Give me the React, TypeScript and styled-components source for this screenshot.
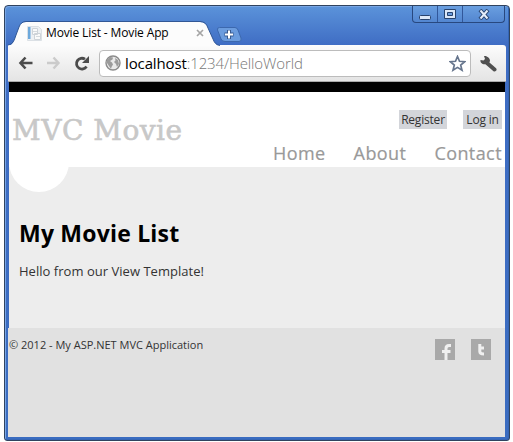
import React from 'react';
import styled, { createGlobalStyle } from 'styled-components';

const Global = createGlobalStyle`
  * { box-sizing: border-box; }
  body { margin: 0; background: #fff; overflow: hidden; font-family: "Open Sans", "Noto Sans", sans-serif; }
`;

const Window = styled.div`
  width: 506px;
  height: 436px;
  margin: 5px 0 0 4px;
  display: flex;
  flex-direction: column;
  padding: 0 3px 3px 4px;
  border: 1px solid #30435f;
  border-radius: 4px 4px 3px 3px;
  background: linear-gradient(#5b93da 0, #3f6dc4 39px, #3a6cc0 100%);
  box-shadow: inset 1px 1px 0 #79a6e4, inset -1px -1px 0 #3565b5;
`;

const TitleBar = styled.header`
  height: 39px;
  display: flex;
  align-items: flex-start;
  flex: none;
`;

const Tab = styled.div`
  position: relative;
  width: 211px;
  height: 24px;
  margin-top: 15px;
  padding: 0 12px 0 18px;
  display: flex;
  align-items: center;
`;

const TabShape = styled.svg`
  position: absolute;
  left: -1px;
  top: 0;
`;

const PageIcon = styled.svg`
  position: relative;
  flex: none;
`;

const TabTitle = styled.span`
  position: relative;
  margin-left: 4px;
  flex: 1;
  font-size: 12px;
  line-height: 24px;
  letter-spacing: -0.13px;
  color: #000;
  white-space: nowrap;
`;

const TabClose = styled.svg`
  position: relative;
  margin-right: 4px;
`;

const NewTab = styled.svg`
  margin: 20px 0 0 -4px;
`;

const WindowControls = styled.div`
  display: flex;
  height: 17px;
  margin: 0 1px 0 auto;
  border: 1px solid #28487f;
  border-top: 0;
  border-radius: 0 0 4px 4px;
  background: linear-gradient(#6a9fe0, #5386d0);
`;

const ControlButton = styled.div<{ $width: number }>`
  width: ${(p) => p.$width}px;
  display: flex;
  align-items: center;
  justify-content: center;
  & + & { border-left: 1px solid #31579a; }
`;

const Toolbar = styled.div`
  height: 37px;
  margin-left: -1px;
  flex: none;
  display: flex;
  align-items: center;
  padding: 0 8px 0 10px;
  gap: 12px;
  background: linear-gradient(#fcfcfc, #e4e4e4);
  border-bottom: 1px solid #aaa;
  border-radius: 0 3px 0 0;
`;

const AddressBar = styled.div`
  width: 372px;
  flex: none;
  height: 27px;
  margin: 0 -3px;
  display: flex;
  align-items: center;
  border: 1px solid #bcbcbc;
  border-radius: 4px;
  padding: 0 4px 0 5px;
  background: #fff;
`;

const Url = styled.div`
  flex: 1;
  margin-left: 4px;
  font-size: 15px;
  line-height: 24px;
  letter-spacing: -0.12px;
  color: #777;
  font-weight: 300;
  white-space: nowrap;
`;

const Host = styled.span`
  color: #000;
  font-weight: 400;
`;

const Page = styled.main`
  flex: 1;
  display: flex;
  flex-direction: column;
  margin-right: 1px;
  background: #ededed;
`;

const BlackBar = styled.div`
  height: 10px;
  flex: none;
  background: #000;
`;

const SiteHeader = styled.div`
  position: relative;
  height: 75px;
  flex: none;
  display: flex;
  justify-content: space-between;
  background: #fff;
`;

const Circle = styled.div`
  position: absolute;
  left: 0;
  top: 40px;
  width: 60px;
  height: 60px;
  border-radius: 50%;
  background: #fff;
`;

const Logo = styled.div`
  position: relative;
  margin: 21px 0 0 3px;
  font-family: "DejaVu Serif", serif;
  font-size: 28px;
  line-height: 36px;
  letter-spacing: 0.5px;
  -webkit-text-stroke: 0.6px #c8c8c8;
  color: #c8c8c8;
  white-space: nowrap;
`;

const HeaderRight = styled.div`
  display: flex;
  flex-direction: column;
  align-items: flex-end;
  padding: 18px 3px 0 0;
`;

const Account = styled.div`
  display: flex;
  gap: 16px;
`;

const AccountLink = styled.a<{ $width: number }>`
  width: ${(p) => p.$width}px;
  height: 19px;
  text-align: center;
  font-size: 12px;
  line-height: 20px;
  letter-spacing: -0.2px;
  background: #d3d5da;
  color: #333;
  white-space: nowrap;
`;

const Nav = styled.nav`
  display: flex;
  gap: 28px;
  margin-top: 11px;
`;

const NavLink = styled.a`
  font-size: 18px;
  line-height: 26px;
  letter-spacing: 0.42px;
  -webkit-text-stroke: 0.2px #999;
  color: #999;
`;

const Content = styled.section`
  height: 161px;
  flex: none;
  padding: 50px 0 0 10px;
`;

const Heading = styled.h1`
  margin: 0;
  font-size: 23px;
  line-height: 32px;
  font-weight: 700;
  letter-spacing: 0.2px;
  color: #000;
`;

const Paragraph = styled.p`
  margin: 13px 0 0;
  font-size: 13px;
  line-height: 18px;
  letter-spacing: 0.03px;
  color: #333;
`;

const Footer = styled.footer`
  flex: 1;
  display: flex;
  justify-content: space-between;
  margin-left: -1px;
  padding: 9px 14px 0 1px;
  background: #e1e1e1;
`;

const Copyright = styled.span`
  font-size: 11px;
  line-height: 16px;
  color: #333;
`;

const Social = styled.div`
  display: flex;
  gap: 16px;
  padding-top: 2px;
`;

const SocialIcon = styled.svg`
  background: #a9a9a9;
`;

export default function App() {
  return (
    <>
      <Global />
      <Window>
        <TitleBar>
          <Tab>
            <TabShape width="214" height="25" viewBox="0 0 214 25">
              <path d="M0 25 C5 24 6 20 8 14 L11 6 Q13 1 18 1 H192 Q198 1 200 7 L205 18 Q207 24 212 25 Z" fill="#fcfcfc" />
              <path d="M0 24 C5 23 6 20 8 14 L11 6 Q13 .5 18 .5 H192 Q198 .5 200 7 L205 18 Q207 24 212 24.500" fill="none" stroke="#315795" strokeWidth="1" />
            </TabShape>
            <PageIcon width="15" height="16" viewBox="0 0 15 16">
              <path d="M.5 1.500h11l3 3v11H.5z" fill="#edf0f3" stroke="#dbe0e5" />
              <path d="M1 2h2.500v12H1z" fill="#6da9dc" />
              <path d="M5.500 3.500h5v6h-5zM7.500 8.500h6v6h-6z" fill="#fafafa" stroke="#ced3d8" />
              <path d="M6 6.500h4M9 11.500h4" stroke="#d5dade" />
            </PageIcon>
            <TabTitle>Movie List - Movie App</TabTitle>
            <TabClose width="8" height="8" viewBox="0 0 8 8">
              <path d="M1 1l6 6M7 1L1 7" stroke="#a5a5a5" strokeWidth="1.700" />
            </TabClose>
          </Tab>
          <NewTab width="27" height="17" viewBox="0 0 27 17">
            <path d="M3.500 1.500H19Q21 1.500 22 4L25 12Q26 15.500 23 15.500H9Q6 15.500 5 13L1.500 4Q1 1.500 3.500 1.500Z" fill="#6b9cde" stroke="#3c68ae" />
            <path d="M13 4v9M8.500 8.500h9" stroke="#37598f" strokeWidth="4" />
            <path d="M13 4.500v8M9 8.500h8" stroke="#fff" strokeWidth="2" />
          </NewTab>
          <WindowControls>
            <ControlButton $width={24}>
              <svg width="12" height="14" viewBox="0 0 12 14"><rect x=".5" y="8.500" width="11" height="4" rx="1" fill="#dce8f9" stroke="#28436e" /></svg>
            </ControlButton>
            <ControlButton $width={25}>
              <svg width="12" height="10" viewBox="0 0 12 10"><path d="M.5.5h11v9H.5z" fill="#dce8f9" stroke="#28436e" /><path d="M3.500 3.500h5v3h-5z" fill="#6b9cde" stroke="#28436e" /></svg>
            </ControlButton>
            <ControlButton $width={42}>
              <svg width="12" height="11" viewBox="0 0 12 11"><path d="M2 1l8 9M10 1L2 10" stroke="#28436e" strokeWidth="4" /><path d="M2.500 1.500l7 8M9.500 1.500l-7 8" stroke="#e4edfa" strokeWidth="2" /></svg>
            </ControlButton>
          </WindowControls>
        </TitleBar>
        <Toolbar>
          <svg width="16" height="14" viewBox="0 0 16 14"><path d="M7.500 1.500L2.500 7l5 5.500M3 7h11.500" fill="none" stroke="#4c4c4c" strokeWidth="2.600" /></svg>
          <svg width="16" height="14" viewBox="0 0 16 14"><path d="M7.500 1.500l5 5.500-5 5.500M12 7H1" fill="none" stroke="#cbcbcb" strokeWidth="2.400" /></svg>
          <svg width="16" height="15" viewBox="0 0 16 15"><path d="M12.500 10.500A5.400 5.400 0 1 1 11 3.200" fill="none" stroke="#4c4c4c" strokeWidth="2.800" /><path d="M15 0v7H8z" fill="#4c4c4c" /></svg>
          <AddressBar>
            <svg width="16" height="16" viewBox="0 0 16 16">
              <circle cx="8" cy="8" r="7" fill="#e9e9e9" stroke="#8b8b8b" strokeWidth="1.400" />
              <path d="M2 5l3-3 3 .5-.5 2L5 6l2 1.500 1 2L6.500 12 6 14 4 11 2 8zM10 3l3 2 1 4-2 3-1-3-2-2 1.500-1.500z" fill="#9b9b9b" />
            </svg>
            <Url><Host>localhost</Host>:1234/HelloWorld</Url>
            <svg width="17" height="17" viewBox="0 0 17 17"><path d="M8.500 1.500l2 4.800 5.200.4-4 3.400 1.300 5.100-4.500-2.800L4 15.200l1.300-5.100-4-3.400 5.200-.4z" fill="#fff" stroke="#66758d" strokeWidth="1.700" /></svg>
          </AddressBar>
          <svg width="17" height="17" viewBox="0 0 17 17">
            <path d="M7 8l7.500 6.500" stroke="#505050" strokeWidth="4" strokeLinecap="round" />
            <path d="M4 1l1 3-1.500 1.500L.5 5C0 8 3 10 6 9l3-1 1-2C10 3 7 .5 4 1z" fill="#505050" />
          </svg>
        </Toolbar>
        <Page>
          <BlackBar />
          <SiteHeader>
            <Circle />
            <Logo>MVC Movie</Logo>
            <HeaderRight>
              <Account>
                <AccountLink $width={48}>Register</AccountLink>
                <AccountLink $width={39}>Log in</AccountLink>
              </Account>
              <Nav>
                <NavLink>Home</NavLink>
                <NavLink>About</NavLink>
                <NavLink>Contact</NavLink>
              </Nav>
            </HeaderRight>
          </SiteHeader>
          <Content>
            <Heading>My Movie List</Heading>
            <Paragraph>Hello from our View Template!</Paragraph>
          </Content>
          <Footer>
            <Copyright>© 2012 - My ASP.NET MVC Application</Copyright>
            <Social>
              <SocialIcon width="20" height="21" viewBox="0 0 20 21"><path d="M16 6.500h-2q-3 0-3 3V21M7 12.500h8.500" fill="none" stroke="#f0f0f0" strokeWidth="3" /></SocialIcon>
              <SocialIcon width="20" height="21" viewBox="0 0 20 21"><path d="M8.800 5v7.500q0 2.500 4.200 2.500M8.500 9H13" fill="none" stroke="#f0f0f0" strokeWidth="3" /></SocialIcon>
            </Social>
          </Footer>
        </Page>
      </Window>
    </>
  );
}
